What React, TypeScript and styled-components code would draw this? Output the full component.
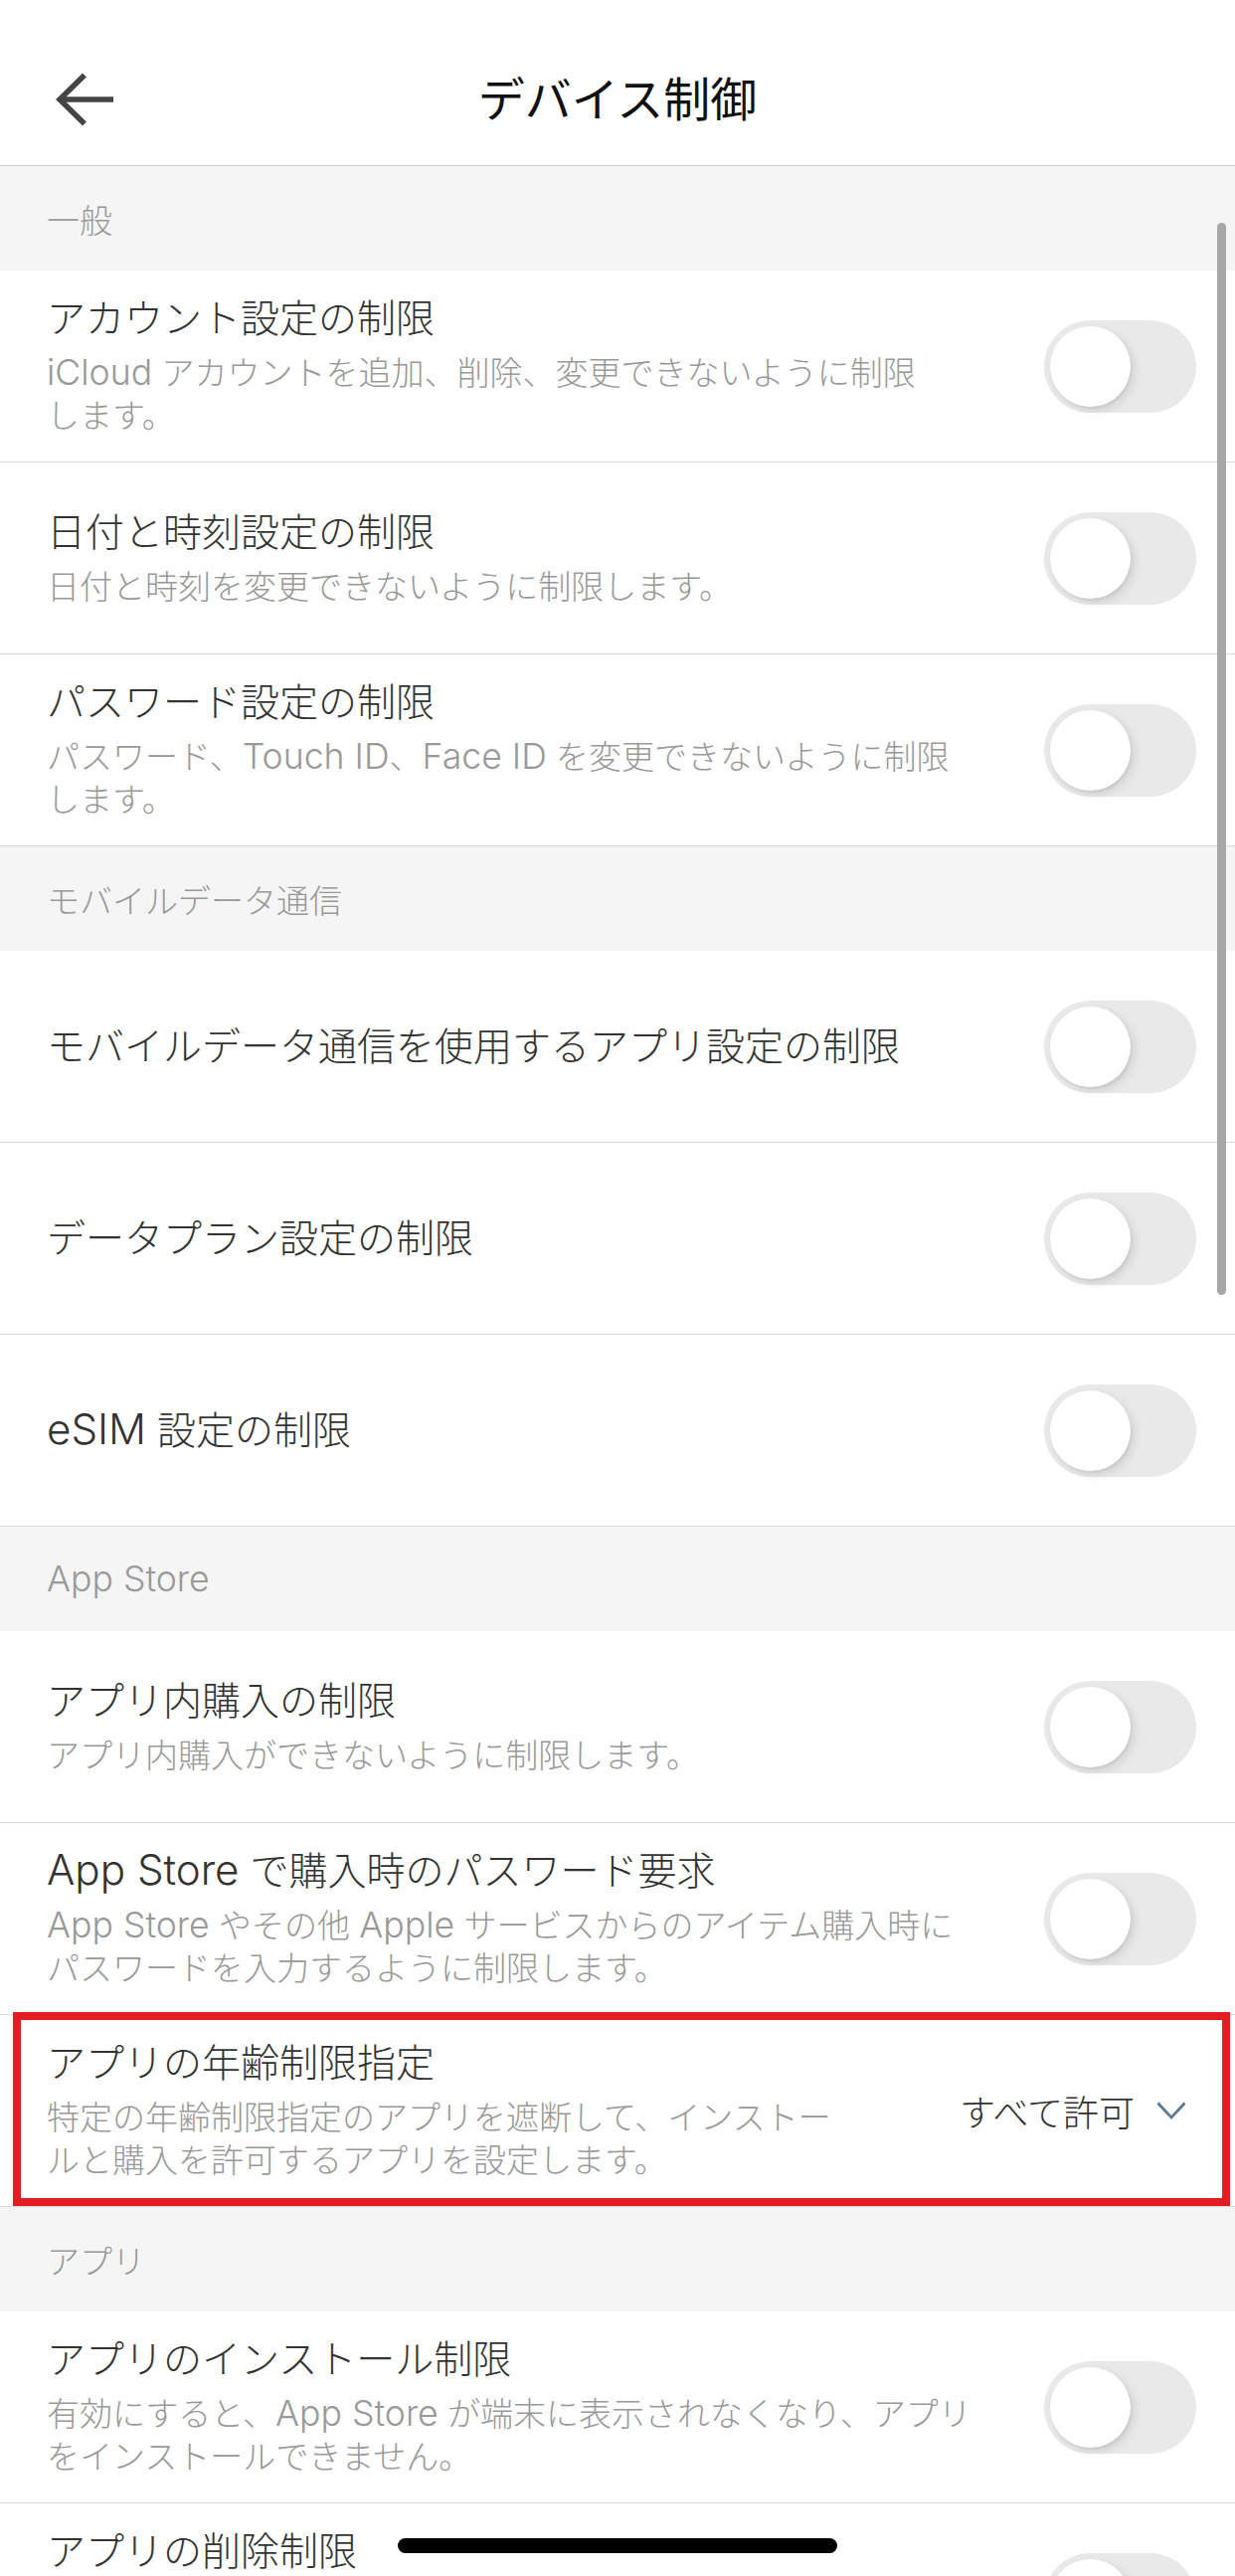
import React from 'react';
import styled, { createGlobalStyle } from 'styled-components';

type Item = {
  title: string;
  desc?: string[];
  value?: string;
  highlighted?: boolean;
};

type Section = {
  label: string;
  items: Item[];
};

const sections: Section[] = [
  {
    label: '一般',
    items: [
      {
        title: 'アカウント設定の制限',
        desc: ['iCloud アカウントを追加、削除、変更できないように制限', 'します。'],
      },
      { title: '日付と時刻設定の制限', desc: ['日付と時刻を変更できないように制限します。'] },
      {
        title: 'パスワード設定の制限',
        desc: ['パスワード、Touch ID、Face ID を変更できないように制限', 'します。'],
      },
    ],
  },
  {
    label: 'モバイルデータ通信',
    items: [
      { title: 'モバイルデータ通信を使用するアプリ設定の制限' },
      { title: 'データプラン設定の制限' },
      { title: 'eSIM 設定の制限' },
    ],
  },
  {
    label: 'App Store',
    items: [
      { title: 'アプリ内購入の制限', desc: ['アプリ内購入ができないように制限します。'] },
      {
        title: 'App Store で購入時のパスワード要求',
        desc: ['App Store やその他 Apple サービスからのアイテム購入時に', 'パスワードを入力するように制限します。'],
      },
      {
        title: 'アプリの年齢制限指定',
        desc: ['特定の年齢制限指定のアプリを遮断して、インストー', 'ルと購入を許可するアプリを設定します。'],
        value: 'すべて許可',
        highlighted: true,
      },
    ],
  },
  {
    label: 'アプリ',
    items: [
      {
        title: 'アプリのインストール制限',
        desc: ['有効にすると、App Store が端末に表示されなくなり、アプリ', 'をインストールできません。'],
      },
      {
        title: 'アプリの削除制限',
        desc: ['有効にすると、端末からアプリを削除できなくなりま', 'す。'],
      },
    ],
  },
];

// latin runs are set a touch larger, like SF next to Hiragino on iOS
const MixedText = ({ text }: { text: string }) => (
  <>
    {text.split(/([A-Za-z][A-Za-z ]*[A-Za-z]|[A-Za-z])/).map((part, i) =>
      i % 2 === 1 ? <Latin key={i}>{part}</Latin> : part,
    )}
  </>
);

const BackIcon = () => (
  <svg width="58" height="54" viewBox="0 0 58 54" fill="none">
    <path d="M58 27H5" stroke="#444" strokeWidth="5.5" />
    <path d="M29 2.5L4 27L29 51.5" stroke="#444" strokeWidth="5.5" strokeLinejoin="miter" />
  </svg>
);

const ChevronDown = () => (
  <svg width="30" height="18" viewBox="0 0 30 18" fill="none">
    <path d="M1.5 1.5L15 16L28.5 1.5" stroke="#5b7a93" strokeWidth="2.8" />
  </svg>
);

const SettingRow = ({ item }: { item: Item }) => (
  <Row>
    <TextCol>
      <Title>
        <MixedText text={item.title} />
      </Title>
      {item.desc && (
        <Desc>
          {item.desc.map((line, i) => (
            <DescLine key={i}>
              <MixedText text={line} />
            </DescLine>
          ))}
        </Desc>
      )}
    </TextCol>
    {item.value ? (
      <ValueSelect>
        {item.value}
        <ChevronDown />
      </ValueSelect>
    ) : (
      <Toggle>
        <Knob />
      </Toggle>
    )}
    {item.highlighted && <Highlight />}
  </Row>
);

const App = () => (
  <Screen>
    <GlobalStyle />
    <Header>
      <BackButton>
        <BackIcon />
      </BackButton>
      <HeaderTitle>デバイス制御</HeaderTitle>
      <span />
    </Header>

    {sections.map((section) => (
      <section key={section.label}>
        <SectionHeader>
          <MixedText text={section.label} />
        </SectionHeader>
        {section.items.map((item) => (
          <SettingRow key={item.title} item={item} />
        ))}
      </section>
    ))}

    <ScrollThumb />
    <HomeIndicator />
  </Screen>
);

export default App;

const GlobalStyle = createGlobalStyle`
  html, body {
    margin: 0;
    padding: 0;
    background: #fff;
  }
  body {
    font-family: Inter, "Noto Sans CJK JP", sans-serif;
    overflow: hidden;
    -webkit-font-smoothing: antialiased;
  }
  * {
    box-sizing: border-box;
  }
`;

const Screen = styled.div`
  position: relative;
  width: 1242px;
  height: 2590px;
  overflow: hidden;
  background: #fff;
`;

const Header = styled.header`
  height: 167px;
  padding-top: 34px;
  border-bottom: 1px solid #cfcfcf;
  display: grid;
  grid-template-columns: 1fr auto 1fr;
  align-items: center;
`;

const BackButton = styled.div`
  display: flex;
  align-items: center;
  padding-left: 56px;
`;

const HeaderTitle = styled.h1`
  margin: 0;
  font-size: 47px;
  font-weight: 400;
  color: #111;
  line-height: 60px;
`;

const Latin = styled.span`
  font-size: 1.08em;
  line-height: 1;
`;

const SectionHeader = styled.div`
  height: 105px;
  padding-left: 47px;
  display: flex;
  align-items: center;
  background: #f5f5f5;
  font-size: 33px;
  font-weight: 300;
  color: #999;
  white-space: pre;
`;

const Row = styled.div`
  position: relative;
  display: flex;
  align-items: center;
  min-height: 193px;
  padding: 24px 39px 24px 47px;
  border-bottom: 1px solid #d9d9d9;
  background: #fff;
`;

const TextCol = styled.div`
  flex: 1;
  min-width: 0;
`;

const Title = styled.div`
  font-size: 39px;
  font-weight: 300;
  line-height: 48px;
  color: #333;
  white-space: pre;
`;

const Desc = styled.div`
  margin-top: 10px;
`;

const DescLine = styled.div`
  font-size: 33px;
  font-weight: 300;
  line-height: 43px;
  color: #999;
  white-space: pre;
`;

const Toggle = styled.div`
  flex-shrink: 0;
  width: 153px;
  height: 93px;
  padding: 0 6px;
  border-radius: 47px;
  background: #e9e9ea;
  display: flex;
  align-items: center;
`;

const Knob = styled.div`
  width: 81px;
  height: 81px;
  border-radius: 50%;
  background: #fff;
  box-shadow: 4px 4px 10px rgba(0, 0, 0, 0.1), 1px 2px 3px rgba(0, 0, 0, 0.06);
`;

const ValueSelect = styled.div`
  flex-shrink: 0;
  display: flex;
  align-items: center;
  gap: 22px;
  padding-right: 10px;
  font-size: 36px;
  font-weight: 300;
  color: #333;
`;

const Highlight = styled.div`
  position: absolute;
  top: -3px;
  left: 13px;
  right: 5px;
  bottom: 0;
  border: 8px solid #e41d20;
  pointer-events: none;
`;

const ScrollThumb = styled.div`
  position: absolute;
  top: 224px;
  right: 9px;
  width: 9px;
  height: 1078px;
  border-radius: 5px;
  background: #a7a7a7;
`;

const HomeIndicator = styled.div`
  position: absolute;
  top: 2552px;
  left: 400px;
  width: 442px;
  height: 15px;
  border-radius: 8px;
  background: #000;
`;
